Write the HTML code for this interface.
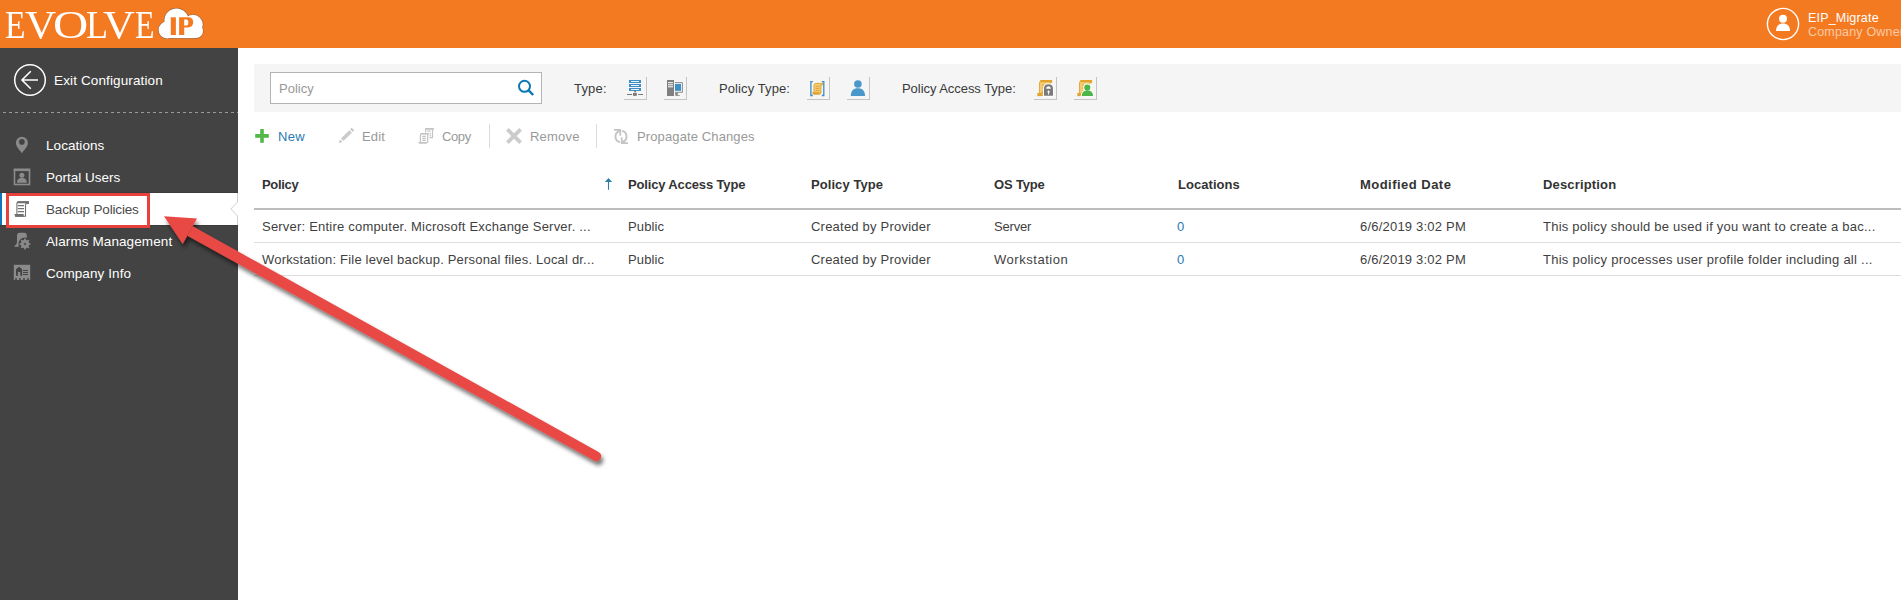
<!DOCTYPE html>
<html><head><meta charset="utf-8">
<style>
*{box-sizing:border-box;margin:0;padding:0}
html,body{width:1901px;height:600px;overflow:hidden;background:#fff;font-family:"Liberation Sans",sans-serif;}
.a{position:absolute;white-space:nowrap}
#hdr{position:absolute;left:0;top:0;width:1901px;height:48px;background:#f47a22}
#side{position:absolute;left:0;top:48px;width:238px;height:552px;background:#434343}
.dash{position:absolute;left:0;top:112px;width:238px;height:1px;background:repeating-linear-gradient(90deg,transparent 0,transparent 3px,#9a9a9a 3px,#9a9a9a 6px,transparent 6px,transparent 5px);}
.nav{font-size:13.5px;line-height:16px;color:#fff}
#filt{position:absolute;left:254px;top:64px;width:1647px;height:48px;background:#f5f5f5}
.lbl{font-size:13px;line-height:16px;color:#3a3a3a}
.ib{position:absolute;top:77px;width:23px;height:23px;border-right:1px solid #c4c4c4;border-bottom:1px solid #c4c4c4}
.tb{font-size:13px;line-height:16px;color:#999}
.th{font-size:13px;line-height:16px;color:#333;font-weight:bold}
.td{font-size:13px;line-height:16px;color:#3f3f3f}
svg.a{overflow:visible}
</style></head><body>
<div id="hdr"></div>
<div class="a" style="left:0;top:5px;width:160px;height:40px;font-family:'Liberation Serif',serif;font-size:39.5px;line-height:40px;color:#fff"><span style="position:absolute;left:5.35px;top:0;transform:scaleX(0.85);transform-origin:0 0">E</span><span style="position:absolute;left:25.2px;top:0;transform:scaleX(1.093);transform-origin:0 0">V</span><span style="position:absolute;left:52.57px;top:0;transform:scaleX(1.235);transform-origin:0 0">O</span><span style="position:absolute;left:86.49px;top:0;transform:scaleX(0.914);transform-origin:0 0">L</span><span style="position:absolute;left:103.2px;top:0;transform:scaleX(1.114);transform-origin:0 0">V</span><span style="position:absolute;left:135.29px;top:0;transform:scaleX(0.809);transform-origin:0 0">E</span></div>
<svg class="a" style="left:0;top:0" width="1901" height="48" viewBox="0 0 1901 48">
  <g fill="#a0643c" stroke="#a0643c" stroke-width="1.3"><circle cx="167" cy="30" r="8.4"/><circle cx="176.5" cy="20.6" r="12.1"/><circle cx="193" cy="24.6" r="9.8"/><circle cx="196" cy="31.1" r="7"/><rect x="166" y="26" width="30" height="12.1"/></g>
  <g fill="#fff"><circle cx="167" cy="30" r="8.4"/><circle cx="176.5" cy="20.6" r="12.1"/><circle cx="193" cy="24.6" r="9.8"/><circle cx="196" cy="31.1" r="7"/><rect x="166" y="26" width="30" height="12.1"/></g>
  <g fill="#f47a22"><rect x="170.8" y="17.3" width="5.1" height="17.7"/><path fill-rule="evenodd" d="M179.1 17.3 H188 Q193.2 17.3 193.2 22.3 Q193.2 27.4 188 27.4 H184.2 V35 H179.1 Z M184.2 19.4 V25.4 H186.6 Q188.3 25.4 188.3 22.4 Q188.3 19.4 186.6 19.4 Z"/></g>
  <circle cx="1783" cy="24" r="15.6" fill="none" stroke="#fff" stroke-width="1.4"/>
  <circle cx="1783" cy="18.8" r="4" fill="#fff"/>
  <path d="M1776 31 C1776 25.5 1779 23.4 1783 23.4 C1787 23.4 1790 25.5 1790 31 Z" fill="#fff"/>
</svg>

<div class="a" style="left:1808px;top:11px;font-size:12.5px;line-height:15px;color:#fff;letter-spacing:0.18px">EIP_Migrate</div>
<div class="a" style="left:1808px;top:25px;font-size:12.5px;line-height:15px;color:#fbc9a2;letter-spacing:0.18px">Company Owner</div>

<div id="side"></div>
<div class="dash"></div>
<div class="a" style="left:0;top:192px;width:238px;height:1px;background:#3b3b3b"></div><div class="a" style="left:0;top:225px;width:238px;height:1px;background:#3b3b3b"></div>
<div class="a" style="left:0;top:193px;width:238px;height:32px;background:#fff"></div>
<div class="a" style="left:0;top:193px;width:2px;height:32px;background:#0e76bc"></div>

<svg class="a" style="left:0;top:0" width="238" height="600" viewBox="0 0 238 600">
  <!-- exit -->
  <circle cx="30" cy="80" r="15.3" fill="none" stroke="#fff" stroke-width="1.5"/>
  <path d="M21.6 80 H38 M30.8 71.2 L22 80 L30.8 88.8" fill="none" stroke="#fff" stroke-width="1.6"/>
  <!-- pin -->
  <path fill="#8a8a8a" fill-rule="evenodd" d="M21.9 153.2 C19.2 149.4 15.9 146.8 15.9 142.8 A6 6 0 0 1 27.9 142.8 C27.9 146.8 24.6 149.4 21.9 153.2 Z M21.9 139.1 A2.8 2.8 0 1 0 21.9 144.7 A2.8 2.8 0 1 0 21.9 139.1 Z"/>
  <!-- portal users -->
  <rect x="14.5" y="169.5" width="15" height="15" fill="none" stroke="#8a8a8a" stroke-width="1.6"/>
  <rect x="13.7" y="168.7" width="16.4" height="2.4" fill="#8a8a8a"/>
  <circle cx="21.9" cy="175.2" r="2.5" fill="#8a8a8a"/>
  <path d="M17 182.8 C17 179.3 19 178 21.9 178 C24.8 178 26.8 179.3 26.8 182.8 Z" fill="#8a8a8a"/>
  <!-- backup scroll -->
  <g fill="none" stroke="#707070" stroke-width="1.1">
    <path d="M16.9 214.5 V204 Q16.9 201.8 18.8 201.8 H28.4 V203.4 H26.8 Q25.5 203.4 25.5 205 V216.3 H15"/>
    <path d="M18 205.6 H24 M18 208.6 H24 M18 211.6 H24"/>
  </g>
  <rect x="17.5" y="201.3" width="11.4" height="2" fill="#707070"/>
  <path d="M14.2 214.1 H23.7 V216.8 H15.5 Z" fill="#707070"/>
  <!-- alarms -->
  <path d="M14 246.8 L17 243 V235.4 Q17 232.8 19.6 232.8 H24.2 Q26.8 232.8 26.8 235.4 V246.8 Z" fill="#8a8a8a"/>
  <circle cx="25" cy="244" r="6.6" fill="#434343"/>
  <g fill="#8a8a8a">
    <circle cx="25" cy="244" r="4"/>
    <rect x="24.1" y="238.6" width="1.8" height="10.8"/>
    <rect x="19.6" y="243.1" width="10.8" height="1.8"/>
    <rect x="24.1" y="238.6" width="1.8" height="10.8" transform="rotate(45 25 244)"/>
    <rect x="24.1" y="238.6" width="1.8" height="10.8" transform="rotate(-45 25 244)"/>
  </g>
  <circle cx="25" cy="244" r="1.3" fill="#555"/>
  <!-- company -->
  <rect x="13.8" y="264.8" width="16.4" height="15.2" fill="#8a8a8a"/>
  <path d="M16 275.8 V269.2 L19.1 266.8 L22.1 269.2 V275.8 H20.3 V272 H17.9 V275.8 Z" fill="#434343"/>
  <path d="M23 270.5 H28 M23 272.5 H28 M23 274.5 H28" stroke="#434343" stroke-width="1"/>
  <g fill="#434343"><rect x="15.2" y="278.2" width="1.6" height="1.8"/><rect x="19.2" y="278.2" width="1.6" height="1.8"/><rect x="23.2" y="278.2" width="1.6" height="1.8"/><rect x="27.2" y="278.2" width="1.6" height="1.8"/></g>
  <!-- notch -->
  <path d="M237.5 193 V202 L230.8 209 L237.5 216 V225" fill="#fff" stroke="#d0d0d0" stroke-width="1"/>
</svg>

<div class="a nav" style="left:54px;top:73px;letter-spacing:0.13px">Exit Configuration</div>
<div class="a nav" style="left:46px;top:138px;letter-spacing:0.06px">Locations</div>
<div class="a nav" style="left:46px;top:170px">Portal Users</div>
<div class="a nav" style="left:46px;top:202px;color:#4a4a4a;letter-spacing:-0.18px">Backup Policies</div>
<div class="a nav" style="left:46px;top:234px;letter-spacing:0.1px">Alarms Management</div>
<div class="a nav" style="left:46px;top:266px;letter-spacing:0.09px">Company Info</div>
<div class="a" style="left:6px;top:193px;width:144px;height:35px;border:3px solid #e8413c"></div>

<div id="filt"></div>
<div class="a" style="left:270px;top:72px;width:272px;height:32px;background:#fff;border:1px solid #b4b4b4"></div>
<div class="a" style="left:279px;top:81px;font-size:13px;line-height:16px;color:#999">Policy</div>
<div class="a lbl" style="left:574px;top:81px;letter-spacing:0.2px">Type:</div>
<div class="ib" style="left:624px"></div>
<div class="ib" style="left:664px"></div>
<div class="a lbl" style="left:719px;top:81px;letter-spacing:0.1px">Policy Type:</div>
<div class="ib" style="left:807px"></div>
<div class="ib" style="left:847px"></div>
<div class="a lbl" style="left:902px;top:81px;letter-spacing:-0.05px">Policy Access Type:</div>
<div class="ib" style="left:1034px"></div>
<div class="ib" style="left:1074px"></div>

<svg class="a" style="left:0;top:0" width="1901" height="160" viewBox="0 0 1901 160">
  <!-- search -->
  <circle cx="524.5" cy="86.3" r="5.5" fill="none" stroke="#0a78b5" stroke-width="2"/>
  <path d="M528.4 90.2 L533.2 95" stroke="#0a78b5" stroke-width="2.4"/>
  <!-- server -->
  <g fill="#3d8fc6"><rect x="629" y="80" width="12" height="3"/><rect x="629" y="84" width="12" height="3"/><rect x="629" y="88" width="12" height="3"/></g>
  <g fill="#fff"><rect x="631" y="81.1" width="8" height="0.9"/><rect x="631" y="85.1" width="8" height="0.9"/><rect x="631" y="89.1" width="8" height="0.9"/></g>
  <rect x="634.3" y="91" width="1.6" height="1.3" fill="#666"/>
  <g fill="#777"><rect x="627" y="94" width="5" height="1"/><rect x="638.2" y="94" width="4.8" height="1"/><rect x="633" y="93" width="3.8" height="2.8"/></g>
  <!-- workstation -->
  <rect x="667" y="80" width="7" height="16" fill="#7f7f7f"/>
  <g fill="#fff"><rect x="668" y="82.2" width="5" height="1"/><rect x="668" y="84.3" width="5" height="1"/><rect x="668" y="86.3" width="5" height="1"/></g>
  <path d="M675 82.6 H682.4 V92.3 H675" fill="none" stroke="#7f7f7f" stroke-width="0.9"/>
  <rect x="675" y="84" width="6" height="6.8" fill="#3d8fc6"/>
  <path d="M675.3 92.7 H677.8 V95 H679.7 V95.8 H675.3 Z" fill="#7f7f7f"/>
  <!-- bracket scroll -->
  <path d="M812.8 81.6 H810.9 V95.5 H812.8 M821.8 81.6 H823.8 V95.5 H821.8" fill="none" stroke="#3a8dc5" stroke-width="1.3"/>
  <path d="M814 94 V85.2 Q814 83.4 815.8 83.4 H823 L822.3 85 H821 V92.8 Q821 94 819.8 94 Z" fill="#f3c86f" stroke="#e0a12c" stroke-width="0.9"/>
  <path d="M812 92.3 H819.5 V94.6 H813 Z" fill="#e0a12c"/>
  <path d="M815.8 86.5 H819.4 M815.8 88.5 H819.4 M815.8 90.5 H819.4" stroke="#e0a12c" stroke-width="0.8"/>
  <!-- blue person -->
  <circle cx="857.9" cy="84" r="3.8" fill="#4a97c9"/>
  <path d="M850.8 95.9 C850.8 90.6 853.6 88.2 857.9 88.2 C862.2 88.2 865 90.6 865 95.9 Z" fill="#4a97c9"/>
  <!-- scroll + lock -->
  <path d="M1039.6 94 V82.4 L1040.8 80.6 H1051.6 V82.6 H1049.8 V92.5 H1041.5 V95.6 H1037.6 Z" fill="#f4cf7c" stroke="#e2a42e" stroke-width="1"/>
  <rect x="1040.4" y="80.1" width="11.7" height="2.2" fill="#e2a42e"/>
  <path d="M1041.8 85 H1045.5 M1041.8 88 H1045 M1041.8 91 H1043.5" stroke="#e2a42e" stroke-width="1"/>
  <path d="M1037.1 93 H1042.8 V96 H1037.8 Z" fill="#e2a42e"/>
  <path d="M1043 96.8 V89.2 Q1043 83.3 1048.5 83.3 Q1054 83.3 1054 89.2 V96.8 Z" fill="#fff"/>
  <path d="M1044 95.8 V88.6 Q1044 84.3 1048.5 84.3 Q1053 84.3 1053 88.6 V95.8 Z" fill="#7a7a7a"/>
  <path d="M1046.1 88.7 Q1046.1 86.2 1048.5 86.2 Q1050.9 86.2 1050.9 88.7 Z" fill="#fff"/>
  <path d="M1048.6 90.2 L1047 92.2 H1048.1 V94.6 H1049.1 V92.2 H1050.2 Z" fill="#fff"/>
  <!-- scroll + person -->
  <path d="M1079.6 94 V82.4 L1080.8 80.6 H1091.6 V82.6 H1089.8 V92.5 H1081.5 V95.6 H1077.6 Z" fill="#f4cf7c" stroke="#e2a42e" stroke-width="1"/>
  <rect x="1080.4" y="80.1" width="11.7" height="2.2" fill="#e2a42e"/>
  <path d="M1081.8 85 H1085.5 M1081.8 88 H1085 M1081.8 91 H1083.5" stroke="#e2a42e" stroke-width="1"/>
  <path d="M1077.1 93 H1082.8 V96 H1077.8 Z" fill="#e2a42e"/>
  <circle cx="1087.3" cy="87.6" r="4.1" fill="#fff"/>
  <path d="M1080.8 96.6 C1080.8 91.5 1083.5 89.6 1087.4 89.6 C1091.3 89.6 1094 91.5 1094 96.6 Z" fill="#fff"/>
  <circle cx="1087.3" cy="87.6" r="3.1" fill="#4cb748"/>
  <path d="M1081.8 96 C1081.8 92.3 1084 90.6 1087.4 90.6 C1090.8 90.6 1093 92.3 1093 96 Z" fill="#4cb748"/>

  <!-- toolbar icons -->
  <rect x="260.2" y="129" width="3.6" height="13.8" fill="#52b848"/>
  <rect x="255.2" y="134" width="13.6" height="3.8" fill="#52b848"/>
  <!-- pencil -->
  <path d="M342.2 139.8 L350.6 131.4" stroke="#cbcbcb" stroke-width="3.6"/>
  <path d="M339 143 L339.9 139.5 L342.5 142.1 Z" fill="#c4c4c4"/>
  <path d="M351.5 130.5 L352.9 129.1" stroke="#c4c4c4" stroke-width="3.6"/>
  <!-- copy -->
  <g fill="none" stroke="#c4c4c4" stroke-width="1.2">
    <path d="M425.6 132.6 V130 Q425.6 128.7 427 128.7 H433.6"/>
    <path d="M432.5 129.2 V137.6 H429.4"/>
    <path d="M427.2 131.2 H430.6 M429.6 133.6 H431 M429.6 135.6 H431"/>
    <path d="M420.4 142.4 V135.4 Q420.4 133.7 422 133.7 H428.8"/>
    <path d="M427.7 134 V143"/>
    <path d="M422.2 136.4 H425.8 M422.2 138.4 H425.8 M422.2 140.4 H425.8"/>
  </g>
  <rect x="425.2" y="128" width="8.6" height="1.7" fill="#c4c4c4"/>
  <rect x="421" y="133.1" width="7.8" height="1.4" fill="#c4c4c4"/>
  <path d="M418.2 142.1 H426.8 V143.7 H419.2 Z" fill="#c4c4c4"/>
  <!-- remove -->
  <path d="M507.4 129.4 L520.6 142.6 M520.6 129.4 L507.4 142.6" stroke="#cccccc" stroke-width="3.8"/>
  <!-- refresh -->
  <g fill="none" stroke="#c4c4c4" stroke-width="1.9">
    <path d="M619.6 131.2 A5.6 5.6 0 0 0 620 142.1"/>
    <path d="M622.4 141.8 A5.6 5.6 0 0 0 622 130.9"/>
  </g>
  <path d="M614 129.9 H620.3 V135.8" fill="none" stroke="#c4c4c4" stroke-width="1.7"/>
  <path d="M628 143.1 H621.7 V137.2" fill="none" stroke="#c4c4c4" stroke-width="1.7"/>
  <path d="M617 130 L620.3 133 V130 Z M625 143 L621.7 140 V143 Z" fill="#c4c4c4"/>
  </svg>
<svg class="a" style="left:600px;top:170px" width="20" height="25" viewBox="600 170 20 25">
  <path d="M608.5 189.8 V181.5" stroke="#2b7ea8" stroke-width="1.1"/>
  <path d="M604.9 181.9 L608.5 178 L612.1 181.9 Z" fill="#2b7ea8"/>
</svg>

<div class="a tb" style="left:278px;top:129px;color:#2a7ab3;letter-spacing:0.29px">New</div>
<div class="a tb" style="left:362px;top:129px;letter-spacing:0.14px">Edit</div>
<div class="a tb" style="left:442px;top:129px;letter-spacing:-0.38px">Copy</div>
<div class="a" style="left:489px;top:124px;width:1px;height:24px;background:#dcdcdc"></div>
<div class="a tb" style="left:530px;top:129px;letter-spacing:0.22px">Remove</div>
<div class="a" style="left:596px;top:124px;width:1px;height:24px;background:#dcdcdc"></div>
<div class="a tb" style="left:637px;top:129px;letter-spacing:0.12px">Propagate Changes</div>

<div class="a th" style="left:262px;top:177px;letter-spacing:-0.31px">Policy</div>
<div class="a th" style="left:628px;top:177px;letter-spacing:-0.15px">Policy Access Type</div>
<div class="a th" style="left:811px;top:177px;letter-spacing:0.07px">Policy Type</div>
<div class="a th" style="left:994px;top:177px;letter-spacing:-0.17px">OS Type</div>
<div class="a th" style="left:1178px;top:177px;letter-spacing:0.05px">Locations</div>
<div class="a th" style="left:1360px;top:177px;letter-spacing:0.47px">Modified Date</div>
<div class="a th" style="left:1543px;top:177px;letter-spacing:0.16px">Description</div>
<div class="a" style="left:254px;top:208px;width:1647px;height:2px;background:#bdbdbd"></div>

<div class="a td" style="left:262px;top:219px;letter-spacing:0.21px">Server: Entire computer. Microsoft Exchange Server. ...</div>
<div class="a td" style="left:628px;top:219px;letter-spacing:0.12px">Public</div>
<div class="a td" style="left:811px;top:219px;letter-spacing:0.22px">Created by Provider</div>
<div class="a td" style="left:994px;top:219px;letter-spacing:-0.19px">Server</div>
<div class="a td" style="left:1177px;top:219px;color:#1f7ab8">0</div>
<div class="a td" style="left:1360px;top:219px;letter-spacing:0.21px">6/6/2019 3:02 PM</div>
<div class="a td" style="left:1543px;top:219px;letter-spacing:0.23px">This policy should be used if you want to create a bac...</div>
<div class="a" style="left:254px;top:242px;width:1647px;height:1px;background:#dddddd"></div>

<div class="a td" style="left:262px;top:252px;letter-spacing:0.19px">Workstation: File level backup. Personal files. Local dr...</div>
<div class="a td" style="left:628px;top:252px;letter-spacing:0.12px">Public</div>
<div class="a td" style="left:811px;top:252px;letter-spacing:0.22px">Created by Provider</div>
<div class="a td" style="left:994px;top:252px;letter-spacing:0.54px">Workstation</div>
<div class="a td" style="left:1177px;top:252px;color:#1f7ab8">0</div>
<div class="a td" style="left:1360px;top:252px;letter-spacing:0.21px">6/6/2019 3:02 PM</div>
<div class="a td" style="left:1543px;top:252px;letter-spacing:0.26px">This policy processes user profile folder including all ...</div>
<div class="a" style="left:254px;top:275px;width:1647px;height:1px;background:#dddddd"></div>

<!-- red arrow -->
<svg class="a" style="left:0;top:0" width="1901" height="600" viewBox="0 0 1901 600">
  <defs><filter id="sh" x="-20%" y="-20%" width="140%" height="140%"><feGaussianBlur in="SourceAlpha" stdDeviation="2"/><feOffset dx="1.8" dy="3.6"/><feComponentTransfer><feFuncA type="linear" slope="0.55"/></feComponentTransfer><feMerge><feMergeNode/><feMergeNode in="SourceGraphic"/></feMerge></filter></defs>
  <g filter="url(#sh)" fill="#e84a45">
    <path d="M192.7 226.2 L598.6 451.9 A4.9 4.9 0 0 1 593.9 460.6 L187.4 235.8 Z"/>
    <path d="M164 216.3 L197 218.4 L182.7 244 Z"/>
  </g>
</svg>
</body></html>
